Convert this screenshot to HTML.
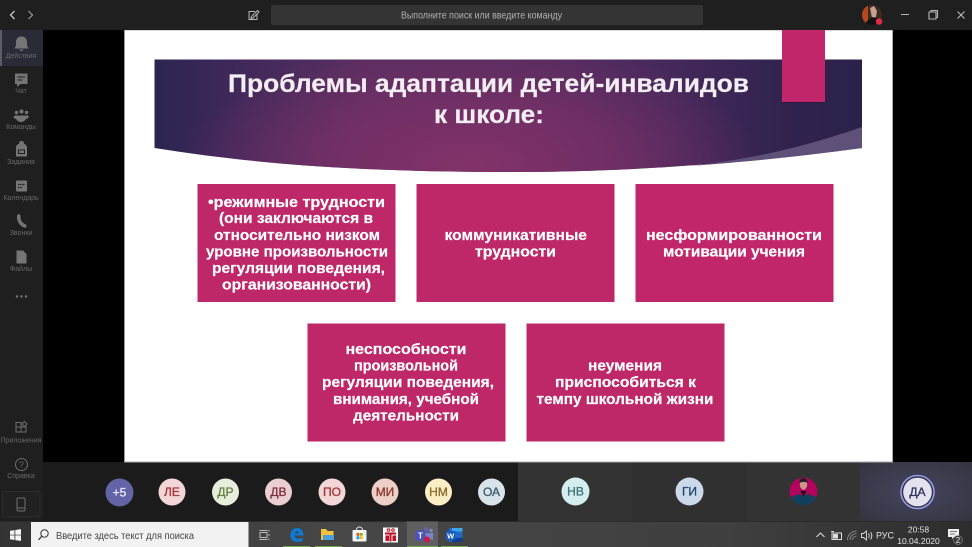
<!DOCTYPE html>
<html lang="ru"><head><meta charset="utf-8"><title>Teams</title>
<style>
html,body{margin:0;padding:0;width:972px;height:547px;overflow:hidden;background:#000}
svg{display:block;font-family:"Liberation Sans",sans-serif}
.s{font-size:15px;font-weight:700;fill:#fff;stroke:#fff;stroke-width:.2px}
.l{font-size:7px;fill:#686868;text-anchor:middle}
.i{fill:#757575}
.a{font-size:12px;font-weight:400;text-anchor:middle;stroke-width:.35px}
</style></head><body>
<svg width="972" height="547" viewBox="0 0 972 547" xmlns="http://www.w3.org/2000/svg">
<defs>
<linearGradient id="ban" x1="0" y1="0" x2="1" y2="0">
<stop offset="0" stop-color="#2b2550"/><stop offset=".1" stop-color="#3d2859"/><stop offset=".3" stop-color="#562e60"/><stop offset=".55" stop-color="#512c5f"/><stop offset=".72" stop-color="#46295c"/><stop offset=".88" stop-color="#32234f"/><stop offset="1" stop-color="#2b2149"/>
</linearGradient>
<radialGradient id="glow" gradientUnits="userSpaceOnUse" cx="470" cy="165" r="290" gradientTransform="translate(470 165) scale(1 .45) translate(-470 -165)">
<stop offset="0" stop-color="#833269"/><stop offset=".5" stop-color="#7a3067" stop-opacity=".75"/><stop offset="1" stop-color="#7a3067" stop-opacity="0"/>
</radialGradient>
<linearGradient id="tb" x1="0" y1="0" x2="1" y2="0">
<stop offset="0" stop-color="#333"/><stop offset=".35" stop-color="#474747"/><stop offset=".75" stop-color="#3f3f3f"/><stop offset="1" stop-color="#2d2d2d"/>
</linearGradient>
<radialGradient id="sel" cx=".5" cy=".5" r=".7"><stop offset="0" stop-color="#45455e"/><stop offset="1" stop-color="#343440"/></radialGradient>
<clipPath id="c1"><circle cx="803.500" cy="491.500" r="14"/></clipPath>
<clipPath id="c2"><circle cx="872" cy="15" r="10"/></clipPath>
</defs>

<rect width="972" height="547" fill="#000"/>
<!-- top bar -->
<rect width="972" height="30" fill="#1f1f1f"/>
<path d="M14.500 11l-4 4 4 4" fill="none" stroke="#c8c8c8" stroke-width="1.300"/>
<path d="M28.500 11l4 4-4 4" fill="none" stroke="#9a9a9a" stroke-width="1.200"/>
<path d="M255 11.500h-6v8h8v-5M251.500 16.500l6-6 1.500 1.500-6 6-2 .5z" fill="none" stroke="#b5b5b5" stroke-width="1"/>
<rect x="271" y="5" width="432" height="20" rx="2" fill="#343434"/>
<text x="401" y="18.500" font-size="10" fill="#b0b0b0" textLength="161" lengthAdjust="spacingAndGlyphs">Выполните поиск или введите команду</text>
<g clip-path="url(#c2)"><rect x="862" y="5" width="20" height="20" fill="#3a2a26"/><path d="M862 5h6v20h-6z" fill="#b5481c"/><path d="M870 8l4-2 3 5-1 6-4 1z" fill="#c9a08c"/><path d="M866 22l6-5 8 2 2 6h-16z" fill="#111"/></g>
<circle cx="879" cy="21.500" r="3.300" fill="#d92b45"/>
<path d="M901 14.500h8" stroke="#b5b5b5" stroke-width="1"/>
<path d="M929 12h7v7h-7zM931 12v-1.500h6.500v7H936" fill="none" stroke="#b5b5b5" stroke-width="1.100"/>
<path d="M957.500 11.500l7 7m0-7l-7 7" stroke="#c0c0c0" stroke-width="1"/>

<!-- bottom strip -->
<rect x="43" y="462" width="475" height="59" fill="#1b1b1b"/>
<rect x="518" y="462" width="114" height="59" fill="#333"/>
<rect x="632" y="462" width="115" height="59" fill="#303030"/>
<rect x="747" y="462" width="113" height="59" fill="#333"/>
<rect x="860" y="462" width="112" height="59" fill="url(#sel)"/>

<!-- rail -->
<rect x="0" y="30" width="43" height="491" fill="#1f1f1f"/>
<rect x="0" y="30" width="43" height="36" fill="#2b2b37"/>
<rect x="0" y="30" width="2" height="36" fill="#5c5c68"/>
<path class="i" d="M21.500 36.500c-3.800 0-5.500 2.700-5.500 6v3l-1.500 3h14l-1.500-3v-3c0-3.300-1.700-6-5.500-6zM19 49.500h5l-2.500 2z"/>
<text class="l" x="21" y="58">Действия</text>
<path class="i" d="M15 73.500h12.500v10.500h-7l-3.500 3v-3h-2z"/><path d="M17.500 77h7.500M17.500 80h5" stroke="#1f1f1f" stroke-width="1.100"/>
<text class="l" x="21" y="93">Чат</text>
<circle class="i" cx="21.500" cy="111.500" r="2"/><circle class="i" cx="16.500" cy="112.500" r="1.700"/><circle class="i" cx="26.500" cy="112.500" r="1.700"/>
<path class="i" d="M14.500 115.500h3l1 0h6l1 0h3v2.500l-2.500 1-1 1.500-3 1.500h-2l-3-1.500-1-1.500-2.500-1z"/>
<text class="l" x="21" y="129">Команды</text>
<path class="i" d="M16 147.500c0-2.500 2-3.500 3-3.500 0-2.500 1-3 2.500-3s2.500.5 2.500 3c1 0 3 1 3 3.500v9h-11z"/><path d="M18.500 150h6v3.500h-6z" fill="none" stroke="#1f1f1f"/>
<text class="l" x="21" y="164">Задания</text>
<rect class="i" x="16" y="180.500" width="11" height="11" rx="1"/><path d="M18 184.500h7M18 187.500h4" stroke="#1f1f1f" stroke-width="1.200" stroke-dasharray="1.500 .7"/>
<text class="l" x="21" y="200">Календарь</text>
<path d="M18.800 216c-.5 4.500 2 8.500 6 10" fill="none" stroke="#757575" stroke-width="3.500" stroke-linecap="round"/>
<text class="l" x="21" y="235">Звонки</text>
<path class="i" d="M16.500 250.500h6.500l3.500 3.500v9.500h-10z"/>
<text class="l" x="21" y="271">Файлы</text>
<circle class="i" cx="17" cy="296.500" r="1.200"/><circle class="i" cx="21.500" cy="296.500" r="1.200"/><circle class="i" cx="26" cy="296.500" r="1.200"/>
<path d="M16 427h5v5h-5zM21 427h5v5h-5zM16 427v-4.500h5v4.500" fill="none" stroke="#6e6e6e" stroke-width="1"/>
<path d="M24.500 421.500l2.500 2.500-2.500 2.500-2.500-2.500z" fill="none" stroke="#6e6e6e" stroke-width="1"/>
<text class="l" x="21" y="442.500">Приложения</text>
<circle cx="21.500" cy="464.500" r="6" fill="none" stroke="#6e6e6e" stroke-width="1"/>
<text x="21.500" y="467.500" font-size="8.500" fill="#6e6e6e" text-anchor="middle">?</text>
<text class="l" x="21" y="478">Справка</text>
<rect x="2.500" y="491.500" width="37.500" height="25.500" rx="2" fill="#212121" stroke="#2e2e2e"/>
<rect x="17" y="498" width="8" height="13" rx="1.200" fill="none" stroke="#6e6e6e"/><path d="M17 508h8" stroke="#6e6e6e"/>

<circle cx="119.500" cy="492.500" r="14" fill="#6264a7"/><text class="a" x="119.500" y="496.500" fill="#e8e8f4" stroke="#e8e8f4">+5</text>
<circle cx="172" cy="492" r="13.500" fill="#f3d6d8"/><text class="a" x="172" y="496" fill="#a4373a" stroke="#a4373a">ЛЕ</text>
<circle cx="225.500" cy="492" r="13.500" fill="#e7efdc"/><text class="a" x="225.500" y="496" fill="#6b7f48" stroke="#6b7f48">ДР</text>
<circle cx="278.500" cy="492" r="13.500" fill="#ebced2"/><text class="a" x="278.500" y="496" fill="#7f2f3f" stroke="#7f2f3f">ДВ</text>
<circle cx="332" cy="492" r="13.500" fill="#f3d6d8"/><text class="a" x="332" y="496" fill="#a4373a" stroke="#a4373a">ПО</text>
<circle cx="385" cy="492" r="13.500" fill="#eecfc6"/><text class="a" x="385" y="496" fill="#8a3a2c" stroke="#8a3a2c">МИ</text>
<circle cx="438.500" cy="492" r="13.500" fill="#fbeec4"/><text class="a" x="438.500" y="496" fill="#8a6d2c" stroke="#8a6d2c">НМ</text>
<circle cx="491.500" cy="492" r="13.500" fill="#d8e3ea"/><text class="a" x="491.500" y="496" fill="#3f5f70" stroke="#3f5f70">ОА</text>
<circle cx="575.500" cy="491.500" r="14" fill="#d4eef0"/><text class="a" x="575.500" y="495.500" fill="#3f7478" stroke="#3f7478">НВ</text>
<circle cx="689.500" cy="491.500" r="14" fill="#ccd9ea"/><text class="a" x="689.500" y="495.500" fill="#24466f" stroke="#24466f">ГИ</text>
<g clip-path="url(#c1)"><rect x="789" y="477" width="29" height="29" fill="#b0045f"/><path d="M790 506l1-9 8-3 4.500 2 4.500-2 8 3 1 9z" fill="#123f5c"/><path d="M800.500 491l3 5.500 3-5.500z" fill="#111"/><ellipse cx="803.500" cy="484.500" rx="3.700" ry="5.200" fill="#c89a86"/><path d="M799.500 483c0-3.500 1.800-5 4-5s4 1.500 4 5c-2-1.500-5.500-1.500-8 0z" fill="#222"/></g>
<circle cx="917.500" cy="492" r="17.300" fill="#9a9cec"/>
<circle cx="917.500" cy="492" r="15.800" fill="#34344a"/>
<circle cx="917.500" cy="492" r="14.300" fill="#e4e2ee"/><text class="a" x="917.500" y="496" fill="#33345e" stroke="#33345e">ДА</text>

<!-- slide -->
<rect x="124.500" y="30" width="768" height="432.500" fill="#fff"/>
<rect x="124" y="30" width="1" height="432.500" fill="#9a9a9a"/>
<rect x="892" y="30" width="1" height="432.500" fill="#aaa"/>
<rect x="125" y="30" width="767" height="1" fill="#d8d8d8"/>
<rect x="125" y="461.500" width="767" height="1" fill="#aaa"/>
<path d="M154.500 59.500H862V148C730 165 620 172 510 172C370 172 260 165 154.500 148Z" fill="url(#ban)"/>
<path d="M154.500 59.500H862V148C730 165 620 172 510 172C370 172 260 165 154.500 148Z" fill="url(#glow)"/>
<path d="M862 127C810 145 760 158 690 166C760 161 810 155 862 148Z" fill="#5e5078"/>
<rect x="782" y="30" width="43" height="72.500" fill="#c1266a"/>
<rect x="782" y="102" width="43" height="1" fill="#26193f"/>
<text x="228" y="92" font-size="25" font-weight="700" fill="#f3eef3" stroke="#f3eef3" stroke-width=".2" textLength="521" lengthAdjust="spacingAndGlyphs">Проблемы адаптации детей-инвалидов</text>
<text x="434" y="123" font-size="25" font-weight="700" fill="#f3eef3" stroke="#f3eef3" stroke-width=".2" textLength="110" lengthAdjust="spacingAndGlyphs">к школе:</text>

<rect x="197.500" y="184" width="198" height="118" fill="#bf2868"/>
<rect x="416.500" y="184" width="198" height="118" fill="#bf2868"/>
<rect x="635.500" y="184" width="198" height="118" fill="#c1266a"/>
<rect x="307.500" y="323.500" width="198" height="118" fill="#bf2868"/>
<rect x="526.500" y="323.500" width="198" height="118" fill="#bf2868"/>

<text class="s" x="208" y="207" textLength="177" lengthAdjust="spacingAndGlyphs">•режимные трудности</text>
<text class="s" x="219" y="223" textLength="154" lengthAdjust="spacingAndGlyphs">(они заключаются в</text>
<text class="s" x="214" y="240" textLength="166" lengthAdjust="spacingAndGlyphs">относительно низком</text>
<text class="s" x="206" y="256.500" textLength="182" lengthAdjust="spacingAndGlyphs">уровне произвольности</text>
<text class="s" x="212" y="273" textLength="173" lengthAdjust="spacingAndGlyphs">регуляции поведения,</text>
<text class="s" x="222" y="289.500" textLength="149" lengthAdjust="spacingAndGlyphs">организованности)</text>

<text class="s" x="444.500" y="240" textLength="142.500" lengthAdjust="spacingAndGlyphs">коммуникативные</text>
<text class="s" x="475" y="256.500" textLength="81" lengthAdjust="spacingAndGlyphs">трудности</text>

<text class="s" x="646" y="240" textLength="176" lengthAdjust="spacingAndGlyphs">несформированности</text>
<text class="s" x="663" y="256.500" textLength="142" lengthAdjust="spacingAndGlyphs">мотивации учения</text>

<text class="s" x="345.500" y="354" textLength="121" lengthAdjust="spacingAndGlyphs">неспособности</text>
<text class="s" x="354" y="370.500" textLength="104" lengthAdjust="spacingAndGlyphs">произвольной</text>
<text class="s" x="322" y="387" textLength="172" lengthAdjust="spacingAndGlyphs">регуляции поведения,</text>
<text class="s" x="333" y="404" textLength="146" lengthAdjust="spacingAndGlyphs">внимания, учебной</text>
<text class="s" x="353" y="420.500" textLength="106" lengthAdjust="spacingAndGlyphs">деятельности</text>

<text class="s" x="588" y="370.500" textLength="74" lengthAdjust="spacingAndGlyphs">неумения</text>
<text class="s" x="555" y="387" textLength="141" lengthAdjust="spacingAndGlyphs">приспособиться к</text>
<text class="s" x="536.500" y="404" textLength="177" lengthAdjust="spacingAndGlyphs">темпу школьной жизни</text>

<!-- taskbar -->
<rect x="0" y="521" width="972" height="26" fill="url(#tb)"/>
<rect x="0" y="521" width="972" height="1" fill="#2b2b2b"/>
<path d="M10 530.800l4.500-.7v4.600H10zM15.300 530l5.700-.9v5.600h-5.700zM10 535.400h4.500V540l-4.500-.7zM15.300 535.400H21v5.600l-5.700-.9z" fill="#f4f4f4"/>
<rect x="31" y="522" width="217.500" height="25" fill="#f2f2f2"/>
<circle cx="44.500" cy="533.500" r="3.700" fill="none" stroke="#333" stroke-width="1"/><path d="M41.800 536.300l-3.300 3.500" stroke="#333" stroke-width="1.200"/>
<text x="56" y="539" font-size="10.500" fill="#444" textLength="138" lengthAdjust="spacingAndGlyphs">Введите здесь текст для поиска</text>
<path d="M259.500 530.500h8M259.500 539.500h8" stroke="#bbb" stroke-width="1.100"/><rect x="260" y="532.500" width="7" height="5" fill="none" stroke="#bbb"/><path d="M269 530v1.500M269 534v2M269 538.500v1.500" stroke="#bbb"/>
<path d="M290.500 535.500c0-5 3-7.500 6.500-7.500 4 0 6.500 3 6.500 7.500h-9c0 3.500 4.500 4 8 2v3.500c-5.500 2-12.500.5-12-5.500zm4.200-2.300h4.500c0-2.500-4-2.500-4.500 0z" fill="#0d7ad6" fill-rule="evenodd"/>
<path d="M321 529h5l1.500 2h6v9h-12.500z" fill="#f3c13c"/><path d="M323 535h11v5h-11z" fill="#4a9fdc"/>
<rect x="352.500" y="530" width="14" height="11.500" rx="1" fill="#f4f4f4"/><path d="M356.500 530c0-4 6-4 6 0" fill="none" stroke="#eee"/>
<rect x="356.500" y="533" width="2.800" height="2.800" fill="#e8542a"/><rect x="359.800" y="533" width="2.800" height="2.800" fill="#7fba00"/><rect x="356.500" y="536.300" width="2.800" height="2.800" fill="#00a4ef"/><rect x="359.800" y="536.300" width="2.800" height="2.800" fill="#ffb900"/>
<rect x="383" y="527.500" width="15" height="15" fill="#f6f6f6"/><path d="M385 532.500h11v2h-4.500v7h-2v-7H385z" fill="#b8132a"/><rect x="385.500" y="535.500" width="3.500" height="5.500" fill="#b8132a"/><rect x="392.500" y="535.500" width="3.500" height="5.500" fill="#b8132a"/><circle cx="388.500" cy="530" r="1.300" fill="none" stroke="#b8132a"/><circle cx="393" cy="530" r="1.300" fill="none" stroke="#b8132a"/>
<rect x="407" y="521.500" width="31" height="25.500" fill="#5f5f5f"/>
<circle cx="426" cy="529.500" r="2.400" fill="#6264a7"/><circle cx="431" cy="530.500" r="1.800" fill="#7b83c9"/><path d="M423 533h10v6.500h-10z" fill="#7b83c9"/>
<rect x="415.500" y="530.500" width="10" height="10" rx="1" fill="#4b53bc"/><text x="420.500" y="538.500" font-size="8" font-weight="700" fill="#fff" text-anchor="middle">T</text>
<circle cx="427" cy="539.500" r="3" fill="#d01b3f"/>
<rect x="449" y="528" width="13.500" height="14" rx="1" fill="#1f6ac0"/><path d="M452 528h10.500v3.500H452z" fill="#41a5ee"/><path d="M452 538h10.500v4H452z" fill="#103f91"/>
<rect x="446" y="531" width="9.500" height="9" fill="#185abd"/><text x="450.700" y="538.500" font-size="7.500" font-weight="700" fill="#fff" text-anchor="middle">W</text>
<rect x="283" y="546" width="27" height="1" fill="#6aa84f"/><rect x="315" y="546" width="27" height="1" fill="#6aa84f"/><rect x="407" y="546" width="31" height="1" fill="#6aa84f"/><rect x="441" y="546" width="27" height="1" fill="#6aa84f"/>

<path d="M816.500 537l4-4 4 4" fill="none" stroke="#ddd" stroke-width="1"/>
<rect x="832" y="533" width="9.500" height="6.500" fill="none" stroke="#ddd"/><rect x="833" y="534" width="5" height="4.500" fill="#ddd"/><path d="M831 531.500h3" stroke="#ddd"/>
<path d="M847.500 540c0-5 4-9 9-9M850 540c0-3.500 3-6.500 6.500-6.500M852.500 540c0-2 2-4 4-4" fill="none" stroke="#999" stroke-width=".8"/>
<path d="M861.500 533.500h2l3-2.500v9l-3-2.500h-2zM868.500 533.500c1 1.500 1 3 0 4.500M870.500 532c1.800 2.500 1.800 5 0 7.500" fill="none" stroke="#ddd" stroke-width=".9"/>
<text x="885" y="538.500" font-size="9" fill="#e4e4e4" text-anchor="middle">РУС</text>
<text x="918.500" y="532.500" font-size="8.500" fill="#e4e4e4" text-anchor="middle">20:58</text>
<text x="918.500" y="544" font-size="8.500" fill="#e4e4e4" text-anchor="middle">10.04.2020</text>
<path d="M948 529h11v8h-5l-2 2v-2h-4z" fill="#eee"/><path d="M950 531.500h7M950 534h5" stroke="#555" stroke-width=".8"/>
<circle cx="958" cy="540" r="4.500" fill="#3a3a3a" stroke="#888" stroke-width=".6"/><text x="958" y="543" font-size="8" fill="#eee" text-anchor="middle">2</text>
</svg>
</body></html>
